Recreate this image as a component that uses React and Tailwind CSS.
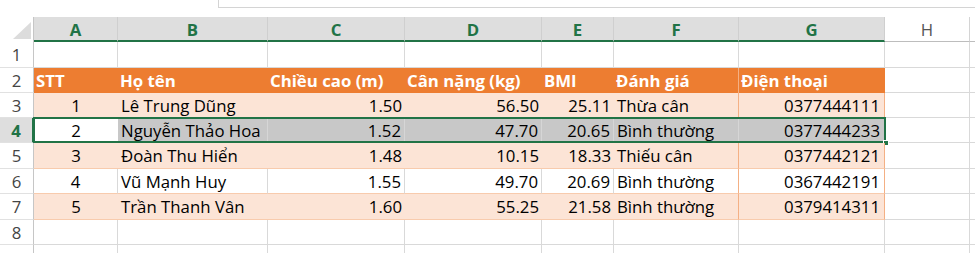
import React from "react";

const widths = ["w-[84px]", "w-[150px]", "w-[137px]", "w-[137px]", "w-[72px]", "w-[125px]", "w-[146px]"];
const letters = ["A", "B", "C", "D", "E", "F", "G"];
const aligns = ["justify-center", "justify-start pl-[3px]", "justify-end pr-[3px]", "justify-end pr-[3px]", "justify-end pr-[3px]", "justify-start pl-[3px]", "justify-end pr-[4px]"];

const header = ["STT", "Họ tên", "Chiều cao (m)", "Cân nặng (kg)", "BMI", "Đánh giá", "Điện thoại"];
const data = [
  ["1", "Lê Trung Dũng", "1.50", "56.50", "25.11", "Thừa cân", "0377444111"],
  ["2", "Nguyễn Thảo Hoa", "1.52", "47.70", "20.65", "Bình thường", "0377444233"],
  ["3", "Đoàn Thu Hiển", "1.48", "10.15", "18.33", "Thiếu cân", "0377442121"],
  ["4", "Vũ Mạnh Huy", "1.55", "49.70", "20.69", "Bình thường", "0367442191"],
  ["5", "Trần Thanh Vân", "1.60", "55.25", "21.58", "Bình thường", "0379414311"],
];
const heights = ["h-[26px]", "h-[25px]", "h-[25px]", "h-[25px]", "h-[26px]", "h-[25px]", "h-[26px]", "h-[25px]", "h-[25px]"];

const RowNum = ({ n, active }) => (
  <div
    className={`w-[34px] shrink-0 flex items-center justify-center pt-[1px] border-b border-[#e1e1e1] ${
      active
        ? "bg-[#dedede] text-[#217346] font-bold border-r-2 border-r-[#217346]"
        : "bg-white text-[#444] border-r border-r-[#c6c6c6]"
    }`}
  >
    {n}
  </div>
);

const Tail = () => (
  <>
    <div className="w-[85px] shrink-0 border-r border-b border-[#d9d9d9]" />
    <div className="flex-1 border-b border-[#d9d9d9]" />
  </>
);

export default function App() {
  return (
    <div
      className="w-[975px] h-[253px] overflow-hidden bg-white text-[16.8px] text-black"
      style={{ fontFamily: "'Open Sans', 'Liberation Sans', sans-serif" }}
    >
      {/* formula bar edge */}
      <div className="h-[17px] flex">
        <div className="w-[218px]" />
        <div className="flex-1 h-[8px] border-l border-b border-[#d4d4d4]" />
      </div>

      {/* column headers */}
      <div className="flex h-[25px]">
        <div className="w-[34px] shrink-0 relative bg-white border-r border-[#c6c6c6]">
          <svg className="absolute right-[2px] bottom-[3px]" width="18" height="17" viewBox="0 0 18 17">
            <polygon points="18,0 18,17 0,17" fill="#dcdcdc" />
          </svg>
        </div>
        {letters.map((l, i) => (
          <div
            key={l}
            className={`${widths[i]} shrink-0 flex items-center justify-center pt-[2px] bg-[#dedede] text-[#217346] font-bold border-r border-r-[#cfcfcf] border-b-2 border-b-[#217346]`}
          >
            {l}
          </div>
        ))}
        <div className="w-[85px] shrink-0 flex items-center justify-center pt-[2px] text-[#555] border-r border-[#d4d4d4] border-b border-b-[#bdbdbd]">
          H
        </div>
        <div className="flex-1 border-b border-[#bdbdbd]" />
      </div>

      {/* row 1 */}
      <div className={`flex ${heights[0]}`}>
        <RowNum n={1} />
        {widths.map((w, i) => (
          <div key={i} className={`${w} shrink-0 border-r border-b border-[#d9d9d9]`} />
        ))}
        <Tail />
      </div>

      {/* row 2 - orange header */}
      <div className={`flex ${heights[1]}`}>
        <RowNum n={2} />
        {header.map((h, i) => (
          <div
            key={i}
            className={`${widths[i]} shrink-0 flex items-center pt-[1px] bg-[#ed7d31] text-white font-bold pl-[2px] ${
              i === 5 ? "border-r border-r-[#f4b084]" : ""
            }`}
          >
            {h}
          </div>
        ))}
        <Tail />
      </div>

      {/* data rows */}
      {data.map((row, r) => {
        const active = r === 1;
        const orange = r % 2 === 0;
        return (
          <div key={r} className={`flex relative ${heights[r + 2]}`}>
            <RowNum n={r + 3} active={active} />
            {row.map((v, i) => (
              <div
                key={i}
                className={`${widths[i]} shrink-0 flex items-center pt-[1px] ${aligns[i]} ${
                  active
                    ? i === 0
                      ? "bg-white"
                      : "bg-[#c8c8c8] border-r border-r-[#d6d6d6]"
                    : orange
                    ? "bg-[#fce4d6] border-b border-b-[#f8cbad]"
                    : "bg-white border-r border-r-[#d9d9d9] border-b border-b-[#f8cbad]"
                } ${i === 5 && !active ? "border-r border-r-[#f4b084]" : ""} ${
                  i === 6 && !active ? "border-r border-r-[#f4b084]" : ""
                }`}
              >
                {v}
              </div>
            ))}
            <Tail />
            {active && (
              <div className="absolute left-[33px] top-[-1px] w-[853px] h-[26px] border-2 border-[#217346] pointer-events-none">
                <div className="absolute right-[-5px] bottom-[-5px] w-[6px] h-[6px] bg-[#217346] border border-white" />
              </div>
            )}
          </div>
        );
      })}

      {/* row 8 */}
      <div className={`flex ${heights[7]}`}>
        <RowNum n={8} />
        {widths.map((w, i) => (
          <div key={i} className={`${w} shrink-0 border-r border-b border-[#d9d9d9]`} />
        ))}
        <Tail />
      </div>

      {/* row 9, cut off by the window */}
      <div className="flex h-[25px]">
        <div className="w-[34px] shrink-0 bg-white border-r border-[#c6c6c6]" />
        {widths.map((w, i) => (
          <div key={i} className={`${w} shrink-0 border-r border-[#d9d9d9]`} />
        ))}
        <div className="w-[85px] shrink-0 border-r border-[#d9d9d9]" />
      </div>
    </div>
  );
}
